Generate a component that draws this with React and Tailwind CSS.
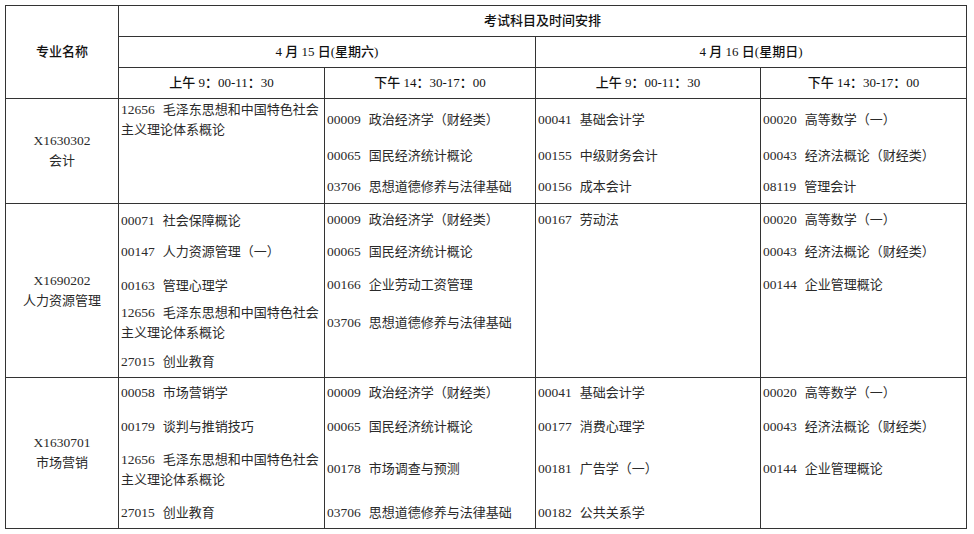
import React from 'react';

// ---------------------------------------------------------------------------
// Exam schedule table — 考试科目及时间安排
// ---------------------------------------------------------------------------
const FONT = { fontFamily: '"Liberation Serif", "Noto Sans CJK SC", serif' };

const MAO = ['12656', '毛泽东思想和中国特色社会', '主义理论体系概论'];

const rows = [
  {
    code: 'X1630302', name: '会计', h: 'h-[105px]',
    cells: [
      [{ mt: 'mt-[1px]', c: MAO[0], n: MAO[1], n2: MAO[2] }],
      [
        { mt: 'mt-[11px]', c: '00009', n: '政治经济学（财经类）' },
        { mt: 'mt-[16px]', c: '00065', n: '国民经济统计概论' },
        { mt: 'mt-[11px]', c: '03706', n: '思想道德修养与法律基础' },
      ],
      [
        { mt: 'mt-[11px]', c: '00041', n: '基础会计学' },
        { mt: 'mt-[16px]', c: '00155', n: '中级财务会计' },
        { mt: 'mt-[11px]', c: '00156', n: '成本会计' },
      ],
      [
        { mt: 'mt-[11px]', c: '00020', n: '高等数学（一）' },
        { mt: 'mt-[16px]', c: '00043', n: '经济法概论（财经类）' },
        { mt: 'mt-[11px]', c: '08119', n: '管理会计' },
      ],
    ],
  },
  {
    code: 'X1690202', name: '人力资源管理', h: 'h-[174px]',
    cells: [
      [
        { mt: 'mt-[7px]', c: '00071', n: '社会保障概论' },
        { mt: 'mt-[11px]', c: '00147', n: '人力资源管理（一）' },
        { mt: 'mt-[14px]', c: '00163', n: '管理心理学' },
        { mt: 'mt-[7px]', c: MAO[0], n: MAO[1], n2: MAO[2] },
        { mt: 'mt-[9px]', c: '27015', n: '创业教育' },
      ],
      [
        { mt: 'mt-[6px]', c: '00009', n: '政治经济学（财经类）' },
        { mt: 'mt-[12px]', c: '00065', n: '国民经济统计概论' },
        { mt: 'mt-[13px]', c: '00166', n: '企业劳动工资管理' },
        { mt: 'mt-[18px]', c: '03706', n: '思想道德修养与法律基础' },
      ],
      [{ mt: 'mt-[6px]', c: '00167', n: '劳动法' }],
      [
        { mt: 'mt-[6px]', c: '00020', n: '高等数学（一）' },
        { mt: 'mt-[12px]', c: '00043', n: '经济法概论（财经类）' },
        { mt: 'mt-[13px]', c: '00144', n: '企业管理概论' },
      ],
    ],
  },
  {
    code: 'X1630701', name: '市场营销', h: 'h-[151px]',
    cells: [
      [
        { mt: 'mt-[5px]', c: '00058', n: '市场营销学' },
        { mt: 'mt-[14px]', c: '00179', n: '谈判与推销技巧' },
        { mt: 'mt-[13px]', c: MAO[0], n: MAO[1], n2: MAO[2] },
        { mt: 'mt-[13px]', c: '27015', n: '创业教育' },
      ],
      [
        { mt: 'mt-[5px]', c: '00009', n: '政治经济学（财经类）' },
        { mt: 'mt-[14px]', c: '00065', n: '国民经济统计概论' },
        { mt: 'mt-[22px]', c: '00178', n: '市场调查与预测' },
        { mt: 'mt-[24px]', c: '03706', n: '思想道德修养与法律基础' },
      ],
      [
        { mt: 'mt-[5px]', c: '00041', n: '基础会计学' },
        { mt: 'mt-[14px]', c: '00177', n: '消费心理学' },
        { mt: 'mt-[22px]', c: '00181', n: '广告学（一）' },
        { mt: 'mt-[24px]', c: '00182', n: '公共关系学' },
      ],
      [
        { mt: 'mt-[5px]', c: '00020', n: '高等数学（一）' },
        { mt: 'mt-[14px]', c: '00043', n: '经济法概论（财经类）' },
        { mt: 'mt-[22px]', c: '00144', n: '企业管理概论' },
      ],
    ],
  },
];

const TH = 'border border-[#333] p-0 text-center align-middle font-medium text-[#111] text-[13px] leading-5';
const TD = 'border border-[#333] p-0 pl-[2px] align-top text-[13px] leading-5 text-[#2a2a2a]';

function Item({ it }) {
  return (
    <div className={it.mt}>
      <div className="whitespace-nowrap">
        <span className="text-[13.5px]">{it.c}</span><span className="ml-2">{it.n}</span>
      </div>
      {it.n2 && <div className="whitespace-nowrap">{it.n2}</div>}
    </div>
  );
}

export default function App() {
  return (
    <div className="w-[974px] h-[534px] bg-white pt-[5px] pl-[5px]" style={FONT}>
      <table className="border-collapse table-fixed w-[961px]">
        <colgroup>
          <col className="w-[113px]" />
          <col className="w-[206px]" />
          <col className="w-[211px]" />
          <col className="w-[225px]" />
          <col className="w-[206px]" />
        </colgroup>
        <thead>
          <tr className="h-[31px]">
            <th rowSpan={3} className={TH}>专业名称</th>
            <th colSpan={4} className={TH}>考试科目及时间安排</th>
          </tr>
          <tr className="h-[31px]">
            <th colSpan={2} className={TH}>4 月 15 日(星期六)</th>
            <th colSpan={2} className={TH}>4 月 16 日(星期日)</th>
          </tr>
          <tr className="h-[31px]">
            <th className={TH}>上午 9：00-11：30</th>
            <th className={TH}>下午 14：30-17：00</th>
            <th className={TH}>上午 9：00-11：30</th>
            <th className={TH}>下午 14：30-17：00</th>
          </tr>
        </thead>
        <tbody>
          {rows.map(r => (
            <tr key={r.code} className={r.h}>
              <td className="border border-[#333] p-0 text-center align-middle text-[13px] leading-5 text-[#2a2a2a]">
                <div className="font-medium text-[13.5px]">{r.code}</div>
                <div>{r.name}</div>
              </td>
              {r.cells.map((cell, i) => (
                <td key={i} className={TD}>
                  {cell.map((it, j) => <Item key={j} it={it} />)}
                </td>
              ))}
            </tr>
          ))}
        </tbody>
      </table>
    </div>
  );
}
